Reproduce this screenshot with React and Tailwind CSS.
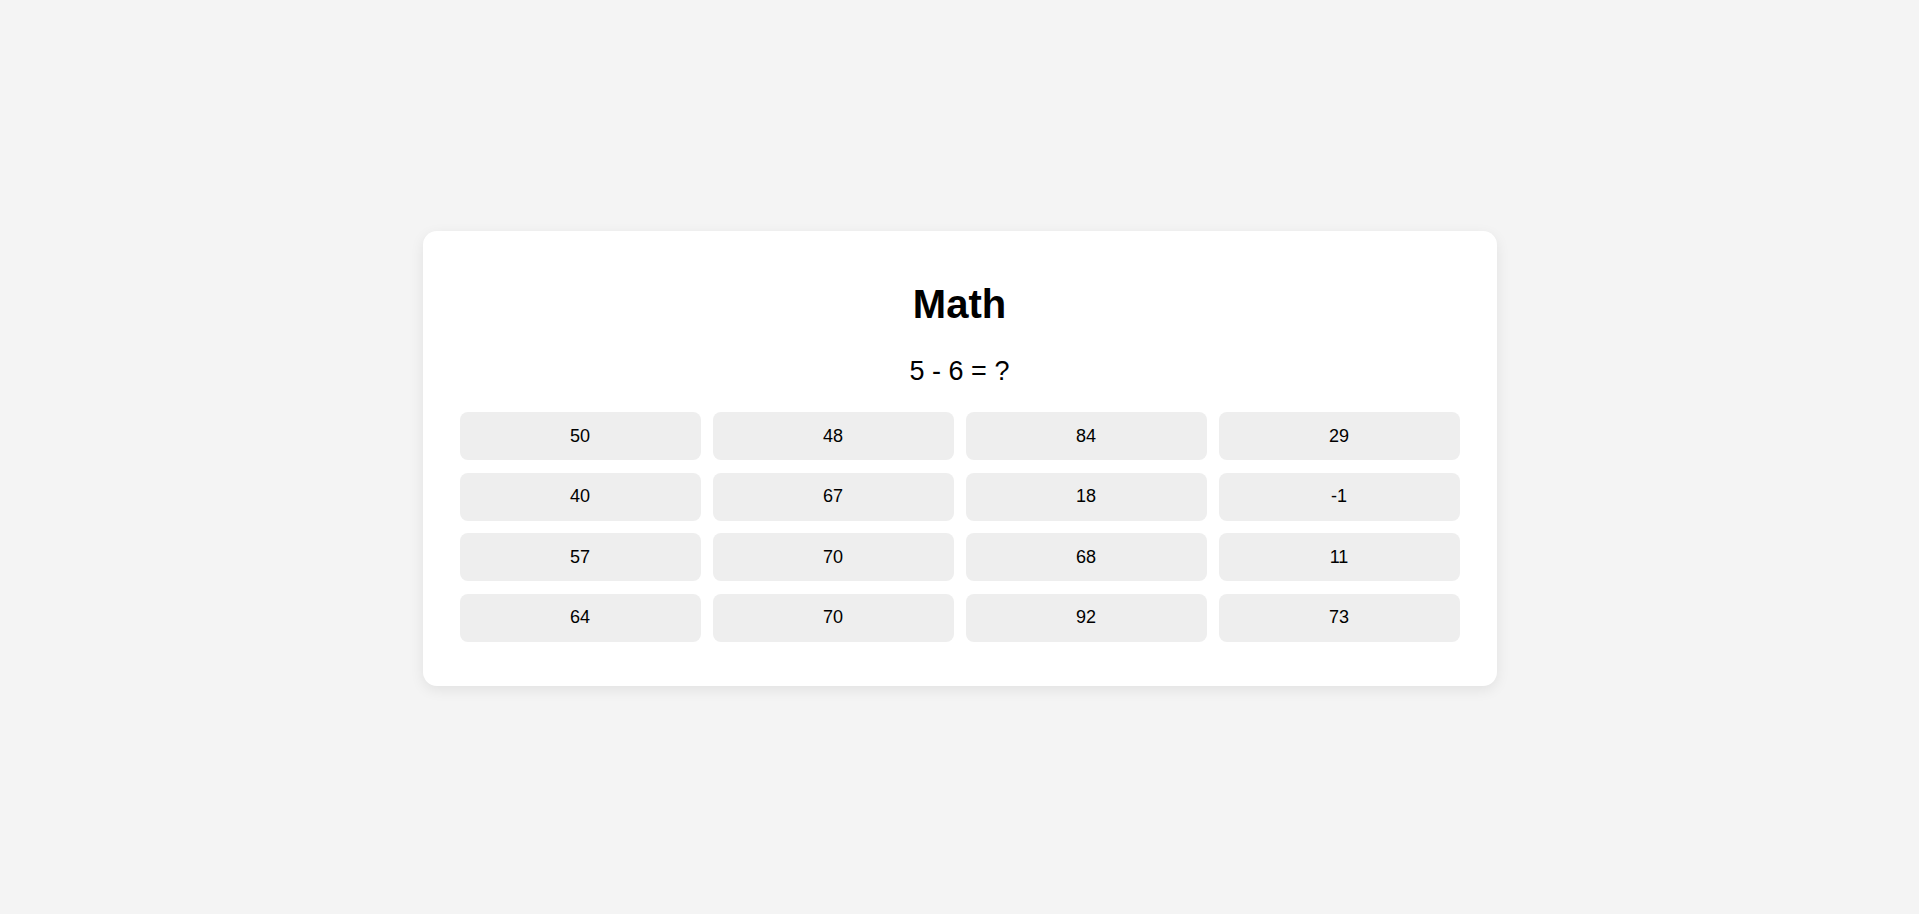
const answers = [50, 48, 84, 29, 40, 67, 18, -1, 57, 70, 68, 11, 64, 70, 92, 73];

export default function App() {
  return (
    <div
      className="min-h-screen flex items-center justify-center bg-[#f4f4f4] pt-[3px]"
      style={{ fontFamily: '"Liberation Sans", Arial, sans-serif' }}
    >
      <div className="w-[1074px] bg-white rounded-[14px] shadow-[0_4px_14px_rgba(0,0,0,0.08)] px-[37px] pt-[37px] pb-[44px] text-black">
        <h1 className="mt-[13px] text-center text-[40px] leading-[46px] font-bold">Math</h1>
        <p className="mt-[29px] text-center text-[27px] leading-[31px]">5 - 6 = ?</p>
        <div className="mt-[25px] grid grid-cols-4 gap-x-[12px] gap-y-[12.5px]">
          {answers.map((n, i) => (
            <button
              key={i}
              className="h-[48px] flex items-center justify-center rounded-[8px] bg-[#eeeeee] text-[18px] text-black"
            >
              {n}
            </button>
          ))}
        </div>
      </div>
    </div>
  );
}
